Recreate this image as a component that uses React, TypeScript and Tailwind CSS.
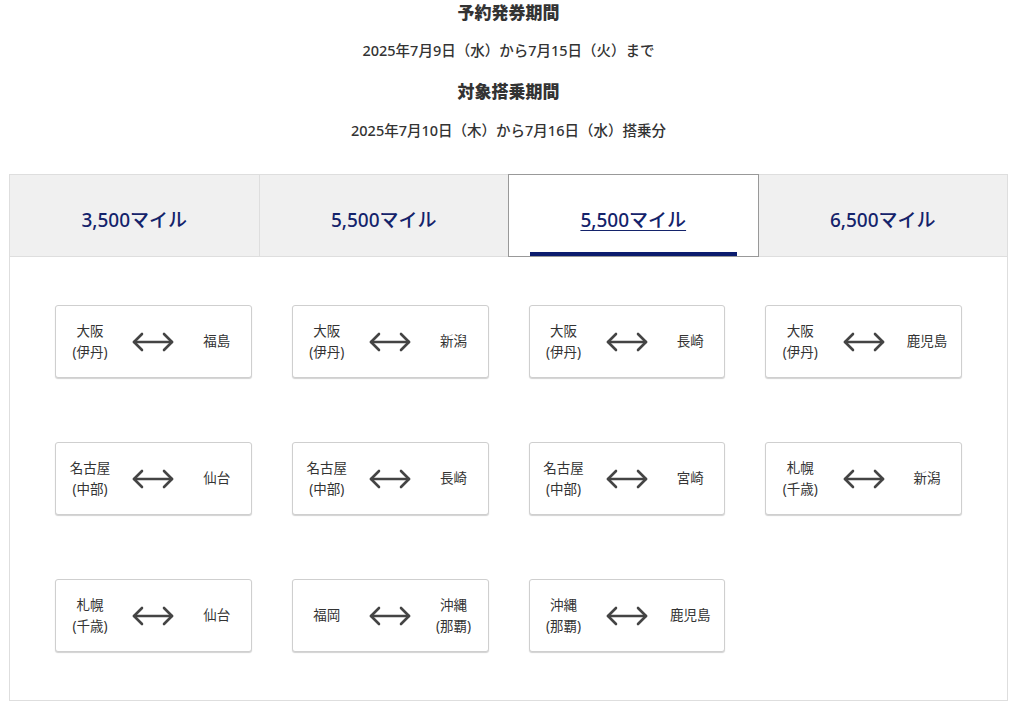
import React from "react";

const F = { fontFamily: '"Noto Sans", "Noto Sans CJK JP", sans-serif' };

type Route = { a: string[]; b: string[] };

const routes: Route[] = [
  { a: ["大阪", "(伊丹)"], b: ["福島"] },
  { a: ["大阪", "(伊丹)"], b: ["新潟"] },
  { a: ["大阪", "(伊丹)"], b: ["長崎"] },
  { a: ["大阪", "(伊丹)"], b: ["鹿児島"] },
  { a: ["名古屋", "(中部)"], b: ["仙台"] },
  { a: ["名古屋", "(中部)"], b: ["長崎"] },
  { a: ["名古屋", "(中部)"], b: ["宮崎"] },
  { a: ["札幌", "(千歳)"], b: ["新潟"] },
  { a: ["札幌", "(千歳)"], b: ["仙台"] },
  { a: ["福岡"], b: ["沖縄", "(那覇)"] },
  { a: ["沖縄", "(那覇)"], b: ["鹿児島"] },
];

const tabs = ["3,500マイル", "5,500マイル", "5,500マイル", "6,500マイル"];

function Arrow() {
  return (
    <svg width="44" height="22" viewBox="0 0 44 22" fill="none" stroke="#444" strokeWidth="2.6" strokeLinecap="round" strokeLinejoin="round">
      <path d="M3 11H41" />
      <path d="M11 3L3 11L11 19" />
      <path d="M33 3L41 11L33 19" />
    </svg>
  );
}

function Place({ lines }: { lines: string[] }) {
  return (
    <div className="w-[62px] flex flex-col items-center text-[13.5px] leading-[21px] text-[#333]">
      {lines.map((l, i) => (
        <span key={i}>{l}</span>
      ))}
    </div>
  );
}

function Card({ r }: { r: Route }) {
  return (
    <div className="h-[73px] bg-white border border-[#cfcfcf] rounded-[3px] shadow-[0_1px_1px_rgba(0,0,0,0.18)] flex items-center justify-between px-[3px]">
      <Place lines={r.a} />
      <Arrow />
      <Place lines={r.b} />
    </div>
  );
}

export default function App() {
  return (
    <div className="w-[1024px] h-[712px] bg-white overflow-hidden" style={F}>
      <div className="ml-[9px] w-[999px]">
        <div className="h-[26px] flex items-center justify-center text-[17px] font-black text-[#333]">予約発券期間</div>
        <div className="mt-[13px] h-[24px] flex items-center justify-center text-[14.5px] font-medium text-[#333]">2025年7月9日（水）から7月15日（火）まで</div>
        <div className="mt-[16px] h-[26px] flex items-center justify-center text-[17px] font-black text-[#333]">対象搭乗期間</div>
        <div className="mt-[14px] h-[24px] flex items-center justify-center text-[14.5px] font-medium text-[#333]">2025年7月10日（木）から7月16日（水）搭乗分</div>
        <div className="mt-[31px] border border-[#dedede]">
          <div className="flex h-[82px] bg-[#f0f0f0] border-b border-[#dedede]">
            {tabs.map((t, i) => {
              const active = i === 2;
              return (
                <div
                  key={i}
                  className={
                    active
                      ? "relative flex-1 flex items-center justify-center bg-white border border-[#999] -mt-px -mb-px text-[19px] font-medium text-[#14236b] underline underline-offset-[3px]"
                      : i === 0 || i === 3
                      ? "flex-1 flex items-center justify-center pt-[10px] text-[19px] font-medium text-[#14236b]"
                      : "flex-1 flex items-center justify-center pt-[10px] border-l border-[#dedede] text-[19px] font-medium text-[#14236b]"
                  }
                >
                  <span className={active ? "pt-[10px]" : ""}>{t}</span>
                  {active && <div className="absolute left-[21px] right-[21px] bottom-0 h-[4px] bg-[#0b1c6e]" />}
                </div>
              );
            })}
          </div>
          <div className="px-[45px] py-[48px] grid grid-cols-4 gap-x-[40px] gap-y-[64px]">
            {routes.map((r, i) => (
              <Card key={i} r={r} />
            ))}
          </div>
        </div>
      </div>
    </div>
  );
}
